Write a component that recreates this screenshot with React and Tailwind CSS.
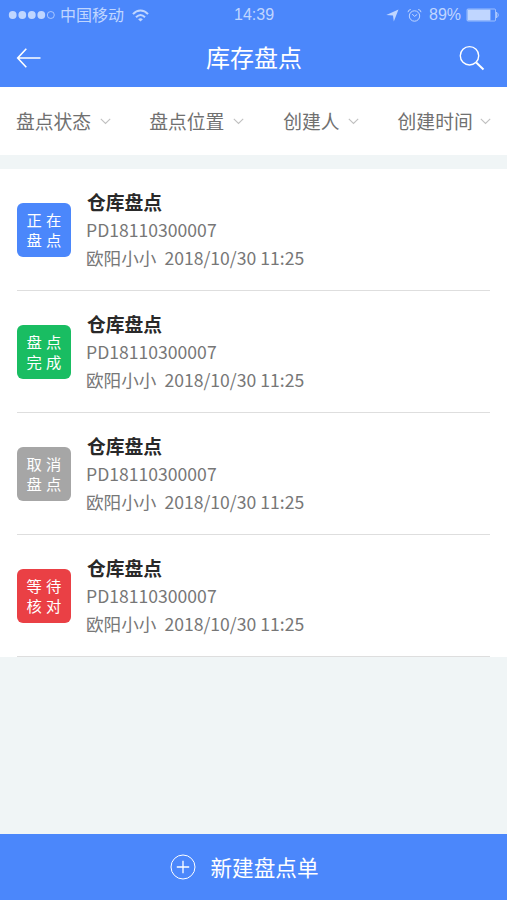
const filters = [
  { label: '盘点状态', place: 'ml-4', gap: 'ml-[9px]' },
  { label: '盘点位置', place: 'ml-[38px]', gap: 'ml-[9px]' },
  { label: '创建人', place: 'ml-[39px]', gap: 'ml-2' },
  { label: '创建时间', place: 'ml-[39px]', gap: 'ml-[7px]' },
];

const records = [
  { status: ['正在', '盘点'], color: 'bg-[#4b87fb]' },
  { status: ['盘点', '完成'], color: 'bg-[#19bd62]' },
  { status: ['取消', '盘点'], color: 'bg-[#a6a6a6]' },
  { status: ['等待', '核对'], color: 'bg-[#ea4045]' },
];

function StatusBar() {
  return (
    <div className="flex h-[30px] items-center text-[#c0d6ff]">
      <svg className="ml-2 shrink-0" width="48" height="10" viewBox="0 0 48 10" fill="currentColor">
        <circle cx="4.7" cy="5" r="3.9" />
        <circle cx="14.3" cy="5" r="3.9" />
        <circle cx="23.8" cy="5" r="3.9" />
        <circle cx="33.3" cy="5" r="3.9" />
        <circle cx="42.8" cy="5" r="3.5" fill="none" stroke="currentColor" strokeWidth="0.8" />
      </svg>
      <span className="ml-1 w-[65px] pb-0.5 text-[16px] leading-none whitespace-nowrap">中国移动</span>
      <svg className="ml-[7px] shrink-0" width="17" height="13" viewBox="0 0 17 13" fill="none" stroke="currentColor" strokeWidth="2">
        <path d="M1 5.2C5.3.4 11.7.4 16 5.2" />
        <path d="M4 8.2c2.8-2.8 6.2-2.8 9 0" />
        <path d="M6.1 10.2q2.4-2 4.8 0l-2.4 2.3z" fill="currentColor" stroke="none" />
      </svg>
      <span className="ml-[85px] w-[42px] font-['Liberation_Sans',sans-serif] text-[16px] leading-none">14:39</span>
      <svg className="ml-[110px] shrink-0" width="13" height="13" viewBox="0 0 13 13" fill="currentColor">
        <path d="M12.5.5 7.8 12.4 7 6.6.3 6z" />
      </svg>
      <svg className="ml-2 shrink-0" width="15" height="15" viewBox="0 0 15 15" fill="none" stroke="currentColor" strokeWidth="1">
        <circle cx="7.5" cy="8" r="5.2" />
        <path d="M1 4.2Q1.2 1.7 3.8 1.5M14 4.2q-.2-2.5-2.8-2.7M5.2 6l2.3 2.4 2.7-2" />
      </svg>
      <span className="ml-[7px] w-[33px] font-['Liberation_Sans',sans-serif] text-[16px] leading-none">89%</span>
      <svg className="ml-1 shrink-0" width="35" height="14" viewBox="0 0 35 14">
        <rect x="1" y="1" width="28.5" height="12" rx="1" fill="none" stroke="currentColor" strokeWidth="0.7" />
        <rect x="1.6" y="1.6" width="22.8" height="10.8" fill="currentColor" />
        <path d="M30.5 4.2q3.6 2.8 0 5.6z" fill="none" stroke="currentColor" strokeWidth="0.8" />
      </svg>
    </div>
  );
}

export default function App() {
  return (
    <div className="flex h-[900px] w-[507px] flex-col overflow-hidden bg-[#f0f5f6] font-['Noto_Sans_CJK_SC',sans-serif]">
      <header className="h-[87px] shrink-0 bg-[#4b87fb] text-white">
        <StatusBar />
        <div className="flex h-[55px] items-center justify-between pr-[22px] pl-4">
          <svg width="26" height="22" viewBox="0 0 26 22" fill="none" stroke="currentColor" strokeWidth="1.6">
            <path d="M10.3 1.8 1.7 11l8.6 9.2M1.7 11H24.5" />
          </svg>
          <h1 className="pb-0.5 pl-[7px] text-[24px] leading-none font-normal">库存盘点</h1>
          <svg width="26" height="26" viewBox="0 0 26 26" fill="none" stroke="currentColor">
            <circle cx="10.5" cy="10.8" r="9.2" strokeWidth="1.4" />
            <path d="m17.2 17.5 7.3 7" strokeWidth="2" />
          </svg>
        </div>
      </header>

      <nav className="flex h-[68px] shrink-0 items-center bg-white pt-px text-[#707070]">
        {filters.map((f) => (
          <button key={f.label} className={`flex items-center ${f.place}`}>
            <span className="text-[18.8px] leading-none whitespace-nowrap">{f.label}</span>
            <svg className={f.gap} width="11" height="7" viewBox="0 0 11 7" fill="none" stroke="#c0c0c0" strokeWidth="1.1">
              <path d="m.8.8 4.7 4.7L10.2.8" />
            </svg>
          </button>
        ))}
      </nav>

      <main className="mt-[14px] bg-white px-[17px]">
        {records.map((r) => (
          <article key={r.status.join('')} className="flex h-[122px] items-center border-b border-[#dedede]">
            <div className={`flex h-[54px] w-[54px] shrink-0 flex-col items-center justify-center rounded-[6px] pb-0.5 pl-1 text-[15.3px] leading-5 tracking-[4.2px] text-white ${r.color}`}>
              <span>{r.status[0]}</span>
              <span>{r.status[1]}</span>
            </div>
            <div className="ml-[15px] pb-0.5 text-[17.6px] text-[#777777]">
              <h2 className="pl-px text-[18.8px] leading-[29px] font-bold text-[#292929]">仓库盘点</h2>
              <p className="leading-7">PD18110300007</p>
              <p className="flex gap-2 leading-[27px]">
                <span>欧阳小小</span>
                <span>2018/10/30 11:25</span>
              </p>
            </div>
          </article>
        ))}
      </main>

      <button className="mt-auto flex h-[66px] shrink-0 items-center bg-[#4b87fb] pl-[170px] text-white">
        <svg width="26" height="26" viewBox="0 0 26 26" fill="none" stroke="currentColor">
          <circle cx="13" cy="13" r="12" strokeWidth="1" />
          <path d="M13 6.8v12.4M6.8 13h12.4" strokeWidth="1.3" />
        </svg>
        <span className="ml-[14.5px] text-[21.6px] leading-none">新建盘点单</span>
      </button>
    </div>
  );
}
